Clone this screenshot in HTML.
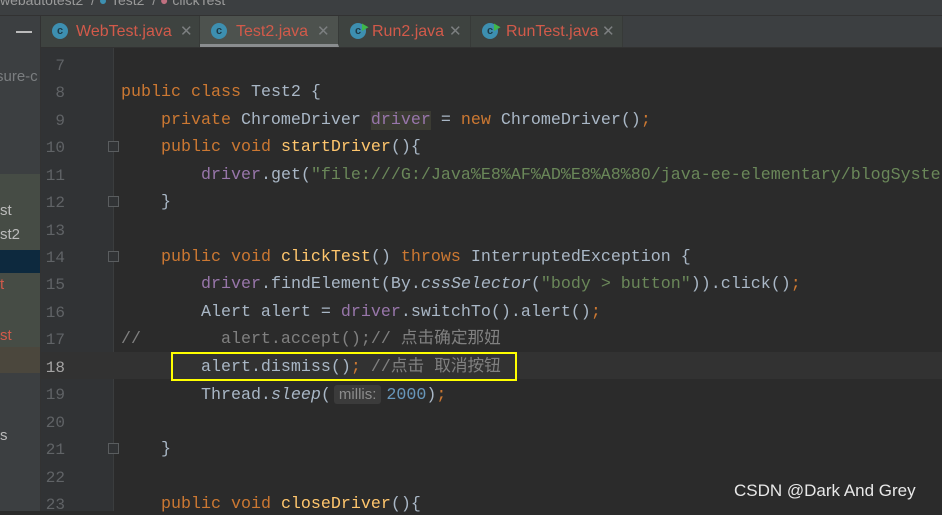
<!DOCTYPE html>
<html><head><meta charset="utf-8"><style>
body{margin:0;width:942px;height:511px;overflow:hidden;background:#2b2b2b;position:relative;font-family:"Liberation Sans","Noto Sans CJK SC",sans-serif}
.abs{position:absolute}
.top{left:0;top:0;width:942px;height:15px;background:#3c3f41;border-bottom:1px solid #323232;overflow:hidden}
.tabs{left:41px;top:16px;width:901px;height:31px;background:#3c3f41;border-bottom:1px solid #323232}
.tab{position:absolute;top:0;height:31px;background:#3e4340;color:#d25a4a;font-size:16px;line-height:31px;border-right:1px solid #373a38}
.tab .ic{position:absolute;left:11px;top:7px;width:16px;height:16px;border-radius:50%;background:#3d8fb0;color:#1e3b48;font-size:11px;line-height:16px;text-align:center;font-weight:bold}
.tab .x{position:absolute;color:#7c7f80;font-size:15px}
.side{left:0;top:16px;width:40px;height:495px;background:#3c3f41;border-right:1px solid #323232;overflow:hidden;white-space:nowrap}
.gut{left:41px;top:48px;width:72px;height:463px;background:#313335}
.code{font-family:"Liberation Mono","Noto Sans CJK SC",monospace;font-size:16.67px;white-space:pre;color:#a9b7c6}
.ln{position:absolute;left:41px;width:24px;text-align:right;color:#606366;font-family:"Liberation Mono",monospace;font-size:16px;line-height:20px;margin-top:2px}
.l{position:absolute;left:121px;line-height:20px;height:20px;margin-top:2px}
.k{color:#cc7832}.f{color:#9876aa}.s{color:#6a8759}.c{color:#808080}.fn{color:#ffc66d}
.fold{position:absolute;left:108px;width:9px;height:9px;border:1px solid #5a5d5f;background:#313335}
</style></head><body>
<div class="abs top"><span style="position:absolute;left:0;top:-8px;color:#9a9a9a;font-size:14px;white-space:nowrap">webautotest2 &nbsp;/ <span style="color:#3d8fb0">●</span> Test2 &nbsp;/ <span style="color:#c07080">●</span> clickTest</span></div>
<div class="abs side">
<div class="abs" style="left:16px;top:15px;width:16px;height:2px;background:#bbb"></div>
<div class="abs" style="left:-4px;top:52px;color:#7b7e80;font-size:15px">sure-c</div>
<div class="abs" style="left:0;top:158px;width:40px;height:76px;background:#464c45"></div>
<div class="abs" style="left:0;top:234px;width:40px;height:23px;background:#0d293e"></div>
<div class="abs" style="left:0;top:257px;width:40px;height:74px;background:#464c45"></div>
<div class="abs" style="left:0;top:331px;width:40px;height:26px;background:#4b473d"></div>
<div class="abs" style="left:0;top:186px;color:#bbb;font-size:15px">st</div>
<div class="abs" style="left:0;top:210px;color:#bbb;font-size:15px">st2</div>
<div class="abs" style="left:0;top:260px;color:#d25a4a;font-size:15px">t</div>
<div class="abs" style="left:0;top:311px;color:#d25a4a;font-size:15px">st</div>
<div class="abs" style="left:0;top:411px;color:#bbb;font-size:15px">s</div>
</div>
<div class="abs tabs">
<div class="tab" style="left:0;width:158px"><span class="ic">c</span><span style="position:absolute;left:35px">WebTest.java</span><span class="x" style="left:139px">✕</span></div>
<div class="tab" style="left:159px;width:138px;background:#4d524e;border-bottom:3px solid #8a8d8f;height:28px"><span class="ic">c</span><span style="position:absolute;left:36px">Test2.java</span><span class="x" style="left:117px">✕</span></div>
<div class="tab" style="left:298px;width:131px"><span class="ic">c</span><span style="position:absolute;top:-4px;color:#3fb74a;font-size:8px;left:22px">▶</span><span style="position:absolute;left:33px">Run2.java</span><span class="x" style="left:110px">✕</span></div>
<div class="tab" style="left:430px;width:151px"><span class="ic">c</span><span style="position:absolute;top:-4px;color:#3fb74a;font-size:8px;left:22px">▶</span><span style="position:absolute;left:35px">RunTest.java</span><span class="x" style="left:131px">✕</span></div>
</div>
<div class="abs gut"></div>
<div class="abs" style="left:113px;top:48px;width:1px;height:463px;background:#3b3d3e"></div>
<div class="fold" style="top:141px"></div><div class="fold" style="top:196px"></div><div class="fold" style="top:251px"></div><div class="fold" style="top:443px"></div>
<div class="abs" style="left:41px;top:352px;width:901px;height:27px;background:#323232"></div>
<div class="abs" style="left:171px;top:352px;width:342px;height:25px;border:2px solid #ffff00"></div>
<div class="code">
<div class="ln" style="top:54px">7</div><div class="ln" style="top:81px">8</div><div class="ln" style="top:109px">9</div><div class="ln" style="top:136px">10</div><div class="ln" style="top:164px">11</div><div class="ln" style="top:191px">12</div><div class="ln" style="top:219px">13</div><div class="ln" style="top:246px">14</div><div class="ln" style="top:273px">15</div><div class="ln" style="top:301px">16</div><div class="ln" style="top:328px">17</div><div class="ln" style="top:356px;color:#a4a3a3">18</div><div class="ln" style="top:383px">19</div><div class="ln" style="top:411px">20</div><div class="ln" style="top:438px">21</div><div class="ln" style="top:466px">22</div><div class="ln" style="top:493px">23</div>
<div class="l" style="top:81px"><span class="k">public class</span> Test2 {</div>
<div class="l" style="top:109px">    <span class="k">private</span> ChromeDriver <span class="f" style="background:#3b3b33">driver</span> = <span class="k">new</span> ChromeDriver()<span class="k">;</span></div>
<div class="l" style="top:136px">    <span class="k">public void</span> <span class="fn">startDriver</span>(){</div>
<div class="l" style="top:164px">        <span class="f">driver</span>.get(<span class="s">"file:///G:/Java%E8%AF%AD%E8%A8%80/java-ee-elementary/blogSyste</span></div>
<div class="l" style="top:191px">    }</div>
<div class="l" style="top:246px">    <span class="k">public void</span> <span class="fn">clickTest</span>() <span class="k">throws</span> InterruptedException {</div>
<div class="l" style="top:273px">        <span class="f">driver</span>.findElement(By.<i>cssSelector</i>(<span class="s">"body &gt; button"</span>)).click()<span class="k">;</span></div>
<div class="l" style="top:301px">        Alert alert = <span class="f">driver</span>.switchTo().alert()<span class="k">;</span></div>
<div class="l c" style="top:328px">//        alert.accept();// 点击确定那妞</div>
<div class="l" style="top:356px">        alert.dismiss()<span class="k">;</span> <span class="c">//点击 取消按钮</span></div>
<div class="l" style="top:383px">        Thread.<i>sleep</i>(<span style="font-family:'Liberation Sans',sans-serif;font-size:15px;color:#8c8c8c;background:#3b3b3b;border-radius:3px;padding:1px 5px;margin:0 5px 0 3px">millis:</span><span style="color:#6897bb">2000</span>)<span class="k">;</span></div>
<div class="l" style="top:438px">    }</div>
<div class="l" style="top:493px">    <span class="k">public void</span> <span class="fn">closeDriver</span>(){</div>
</div>
<div class="abs" style="left:734px;top:481px;color:#e8e8e8;font-size:17px">CSDN @Dark And Grey</div>
</body></html>
